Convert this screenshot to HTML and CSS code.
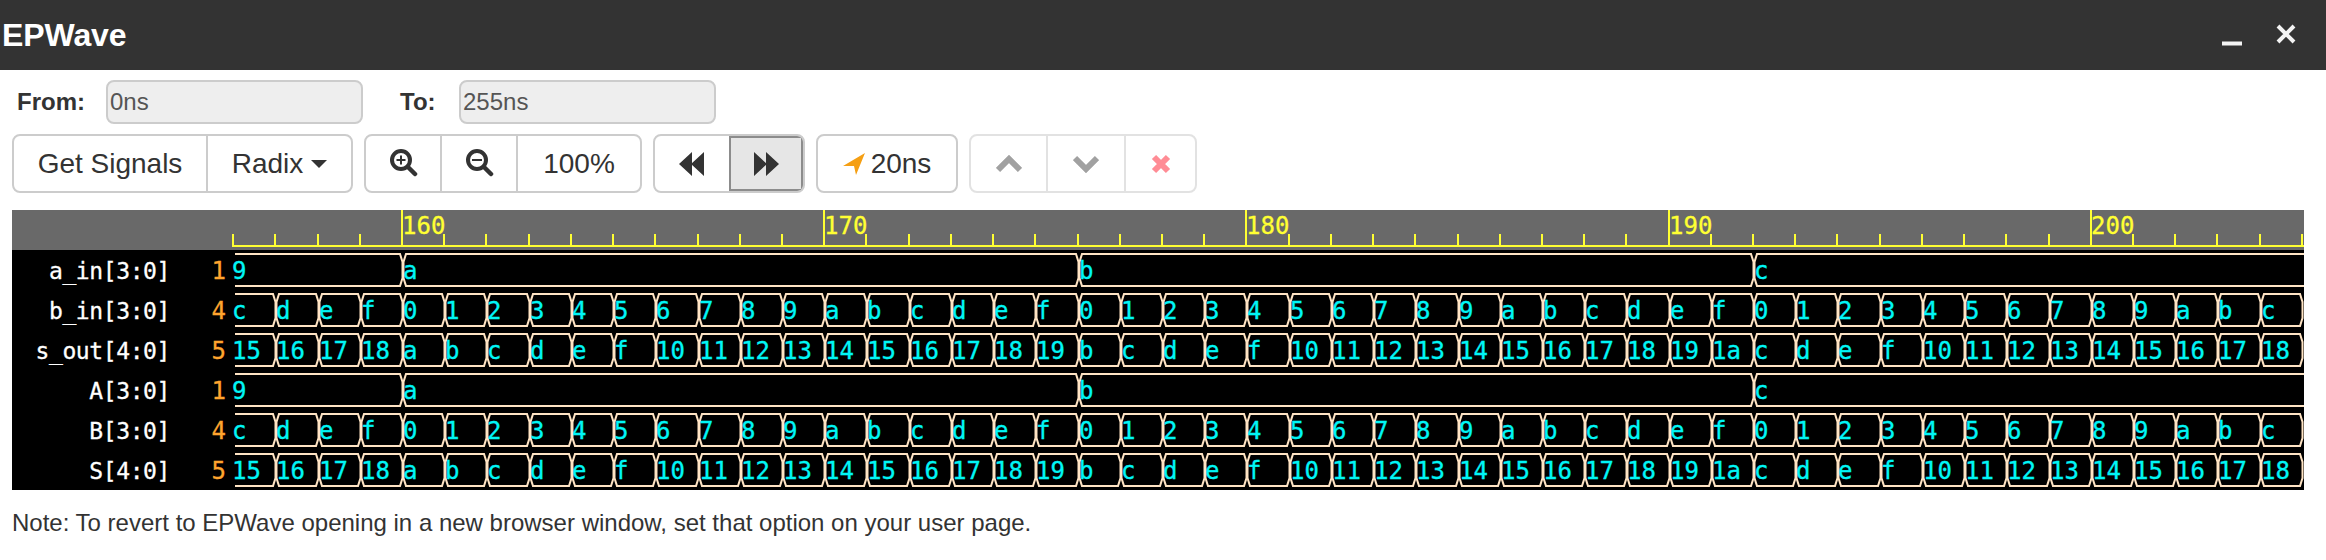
FILE: index.html
```html
<!DOCTYPE html>
<html lang="en">
<head>
<meta charset="utf-8">
<title>EPWave</title>
<link rel="stylesheet" href="styles.css">
</head>
<body>
<header class="titlebar">
  <h1 class="title">EPWave</h1>
  <div class="window-controls">
    <svg class="win-icon" width="20" height="6" viewBox="0 0 20 6"><rect class="win-shape" y="0.5" width="20" height="4"/></svg>
    <svg class="win-icon close" width="20" height="20" viewBox="0 0 20 20"><path class="win-stroke" d="M2 2L18 18M18 2L2 18"/></svg>
  </div>
</header>
<section class="range">
  <label class="range-label from-label">From:</label>
  <input class="range-input" value="0ns" disabled>
  <label class="range-label to-label">To:</label>
  <input class="range-input" value="255ns" disabled>
</section>
<nav class="toolbar">
  <div class="group">
    <button class="btn w-signals">Get Signals</button>
    <button class="btn w-radix">Radix <span class="caret"></span></button>
  </div>
  <div class="group">
    <button class="btn w-zoom" aria-label="Zoom in"><svg width="30" height="32" viewBox="0 0 30 32"><circle class="mag" cx="13" cy="12" r="9"/><path class="mag-h" d="M20 19L27 26"/><path class="mag-s" d="M13 7.5V16.5M8.5 12H17.5"/></svg></button>
    <button class="btn w-zoom-b" aria-label="Zoom out"><svg width="30" height="32" viewBox="0 0 30 32"><circle class="mag" cx="13" cy="12" r="9"/><path class="mag-h" d="M20 19L27 26"/><path class="mag-s" d="M8 12H18"/></svg></button>
    <button class="btn w-percent">100%</button>
  </div>
  <div class="group">
    <button class="btn w-step" aria-label="Previous"><svg class="dark-fill" width="26" height="24" viewBox="0 0 26 24"><path d="M13 0V24L0 12ZM25 0V24L12 12Z"/></svg></button>
    <button class="btn w-step active" aria-label="Next"><svg class="dark-fill" width="26" height="24" viewBox="0 0 26 24"><path d="M1 0V24L14 12ZM13 0V24L26 12Z"/></svg></button>
  </div>
  <div class="group">
    <button class="btn w-time"><svg class="arrow" width="22" height="22" viewBox="0 0 22 22"><path d="M22 0L0 13H11L13 22Z"/></svg>20ns</button>
  </div>
  <div class="group disabled">
    <button class="btn w-nav-a" aria-label="Up"><svg width="26" height="18" viewBox="0 0 26 18"><path class="chev" d="M2 15L13 4L24 15"/></svg></button>
    <button class="btn w-nav-b" aria-label="Down"><svg width="26" height="18" viewBox="0 0 26 18"><path class="chev" d="M2 3L13 14L24 3"/></svg></button>
    <button class="btn w-nav-c" aria-label="Remove"><svg width="20" height="20" viewBox="0 0 20 20"><path class="cross" d="M3 3L17 17M17 3L3 17"/></svg></button>
  </div>
</nav>
<div id="wave" class="wave"></div>
<p class="note">Note: To revert to EPWave opening in a new browser window, set that option on your user page.</p>
<script src="wave.js"></script>
</body>
</html>
```
FILE: styles.css
```css
* { box-sizing: border-box; }
html, body { margin: 0; padding: 0; background: #fff; }
body { font-family: "Liberation Sans", Arial, sans-serif; color: #333; width: 2326px; height: 560px; overflow: hidden; }

.titlebar { height: 70px; background: #333; display: flex; align-items: center; justify-content: space-between; }
.title { margin: 0 0 0 2px; font-size: 32px; font-weight: 700; color: #fff; line-height: 72px; letter-spacing: -0.1px; }
.window-controls { display: flex; align-items: flex-start; gap: 34px; padding-right: 30px; height: 70px; }
.win-icon { margin-top: 41px; display: block; }
.win-icon.close { margin-top: 24px; }
.win-shape { fill: #f4f4f4; }
.win-stroke { stroke: #f4f4f4; stroke-width: 4; fill: none; }

.range { display: flex; align-items: center; height: 44px; margin-top: 10px; }
.range-label { font-size: 24px; font-weight: 700; color: #333; }
.from-label { margin-left: 17px; width: 89px; }
.to-label { margin-left: 37px; width: 59px; }
.range-input { width: 257px; height: 44px; padding: 0 2px; background: #eee; border: 2px solid #ccc; border-radius: 8px; font: 24px "Liberation Sans", Arial, sans-serif; color: #555; opacity: 1; -webkit-text-fill-color: #555; }

.toolbar { display: flex; gap: 11px; margin: 10px 0 0 12px; height: 59px; }
.group { display: flex; border: 2px solid #ccc; border-radius: 8px; background: #fff; overflow: hidden; }
.group.disabled { opacity: 0.55; }
.btn { height: 100%; padding: 0; margin: 0; border: 0; border-left: 2px solid #ccc; background: transparent; color: #333; font: 28px "Liberation Sans", Arial, sans-serif; display: flex; align-items: center; justify-content: center; }
.btn:first-child { border-left: 0; }
.btn.active { background: #e6e6e6; box-shadow: inset 0 0 0 2px #8c8c8c; border-left: 0; }
.w-signals { width: 192px; }
.w-radix { width: 145px; gap: 8px; }
.w-zoom { width: 74px; }
.w-zoom-b { width: 76px; }
.w-percent { width: 124px; }
.w-step { width: 74px; }
.w-time { width: 138px; gap: 6px; }
.w-nav-a { width: 75px; }
.w-nav-b { width: 78px; }
.w-nav-c { width: 71px; }
.caret { width: 0; height: 0; border-left: 8px solid transparent; border-right: 8px solid transparent; border-top: 8px solid #333; }
.mag { fill: none; stroke: #333; stroke-width: 4; }
.mag-h { fill: none; stroke: #333; stroke-width: 4.5; stroke-linecap: round; }
.mag-s { fill: none; stroke: #333; stroke-width: 2; }
.dark-fill { fill: #333; }
.arrow { fill: #f59f13; }
.chev { fill: none; stroke: #555; stroke-width: 6; }
.cross { fill: none; stroke: #ff3040; stroke-width: 6; }

.wave { margin: 17px 0 0 12px; width: 2292px; height: 280px; line-height: 0; }
.wave-svg { display: block; }
.bg-header { fill: #696969; }
.bg-body { fill: #000; }
.axis { fill: #ffff33; }
.ruler-label, .sig-name, .sig-value, .sig-radix { font-family: "DejaVu Sans Mono", monospace; font-size: 24px; stroke-width: 0.3px; }
.ruler-label { fill: #ffff33; stroke: #ffff33; }
.sig-name { fill: #fff; stroke: #fff; text-anchor: end; font-size: 23px; letter-spacing: -0.4px; }
.sig-radix { fill: #ffa52e; stroke: #ffa52e; text-anchor: end; }
.sig-value { fill: #00f6f6; stroke: #00f6f6; }
.cell { fill: none; stroke: #ffe4c4; stroke-width: 2; }

.note { margin: 17px 0 0 12px; font-size: 24px; line-height: 32px; color: #333; }
```
FILE: wave.js
```js
(function () {
  var NS = "http://www.w3.org/2000/svg";
  var START = 156, END = 206, T0 = 402, SCALE = 42.22;
  function px(t) { return Math.round(T0 + (t - 160) * SCALE); }
  function hex(n) { return n.toString(16); }

  function el(parent, tag, attrs, text) {
    var node = document.createElementNS(NS, tag);
    for (var k in attrs) node.setAttribute(k, attrs[k]);
    if (text !== undefined) node.textContent = text;
    parent.appendChild(node);
    return node;
  }

  var svg = el(document.getElementById("wave"), "svg", {
    "class": "wave-svg", width: 2292, height: 280, viewBox: "12 210 2292 280"
  });
  var defs = el(svg, "defs", {});
  el(el(defs, "clipPath", { id: "plot" }), "rect", { x: 232, y: 250, width: 2072, height: 240 });

  el(svg, "rect", { "class": "bg-header", x: 12, y: 210, width: 2292, height: 40 });
  el(svg, "rect", { "class": "bg-body", x: 12, y: 250, width: 2292, height: 240 });

  // Ruler
  el(svg, "rect", { "class": "axis", x: 232, y: 245, width: 2072, height: 2 });
  for (var t = START; t < END; t++) {
    var x = px(t), major = t % 10 === 0;
    if (x > 2304) break;
    el(svg, "rect", { "class": "axis", x: x - 1, y: major ? 210 : 234, width: 2, height: major ? 36 : 12 });
    if (major) el(svg, "text", { "class": "ruler-label", x: x, y: 234 }, String(t));
  }

  // Signals
  var a = function (t) { return 9 + Math.floor((t - 144) / 16); };
  var b = function (t) { return (t - 156 + 12) % 16; };
  var s = function (t) { return a(t) + b(t); };
  var signals = [
    ["a_in[3:0]", "1", a, 16], ["b_in[3:0]", "4", b, 1], ["s_out[4:0]", "5", s, 1],
    ["A[3:0]", "1", a, 16], ["B[3:0]", "4", b, 1], ["S[4:0]", "5", s, 1]
  ];
  var plot = el(svg, "g", { "clip-path": "url(#plot)" });

  signals.forEach(function (sig, i) {
    var top = 254 + i * 40, bot = top + 32, base = top + 25;
    el(svg, "text", { "class": "sig-name", x: 170, y: base }, sig[0]);
    el(svg, "text", { "class": "sig-radix", x: 226, y: base }, sig[1]);

    var step = sig[3];
    var from = START;
    while (from < END - 1) {
      var to = from + step;
      if (step === 16) to = 160 + Math.floor((from - 160) / 16 + 1) * 16;
      var xa = px(from) + 1, xb = px(to) + 1;
      var right = "L" + (xb - 3) + " " + top + "L" + (xb - 0.5) + " " + (top + 8) +
                  "L" + (xb - 0.5) + " " + (bot - 8) + "L" + (xb - 3) + " " + bot;
      var d;
      if (from === START) {
        d = "M" + (xa + 1) + " " + top + right + "L" + (xa + 1) + " " + bot;
      } else {
        d = "M" + (xa + 3) + " " + top + right + "L" + (xa + 3) + " " + bot +
            "L" + (xa + 0.5) + " " + (bot - 8) + "L" + (xa + 0.5) + " " + (top + 8) + "Z";
      }
      el(plot, "path", { "class": "cell", d: d });
      el(svg, "text", { "class": "sig-value", x: from === START ? px(from) - 1 : px(from) + 1, y: base }, hex(sig[2](from)));
      from = to;
    }
  });
})();
```
